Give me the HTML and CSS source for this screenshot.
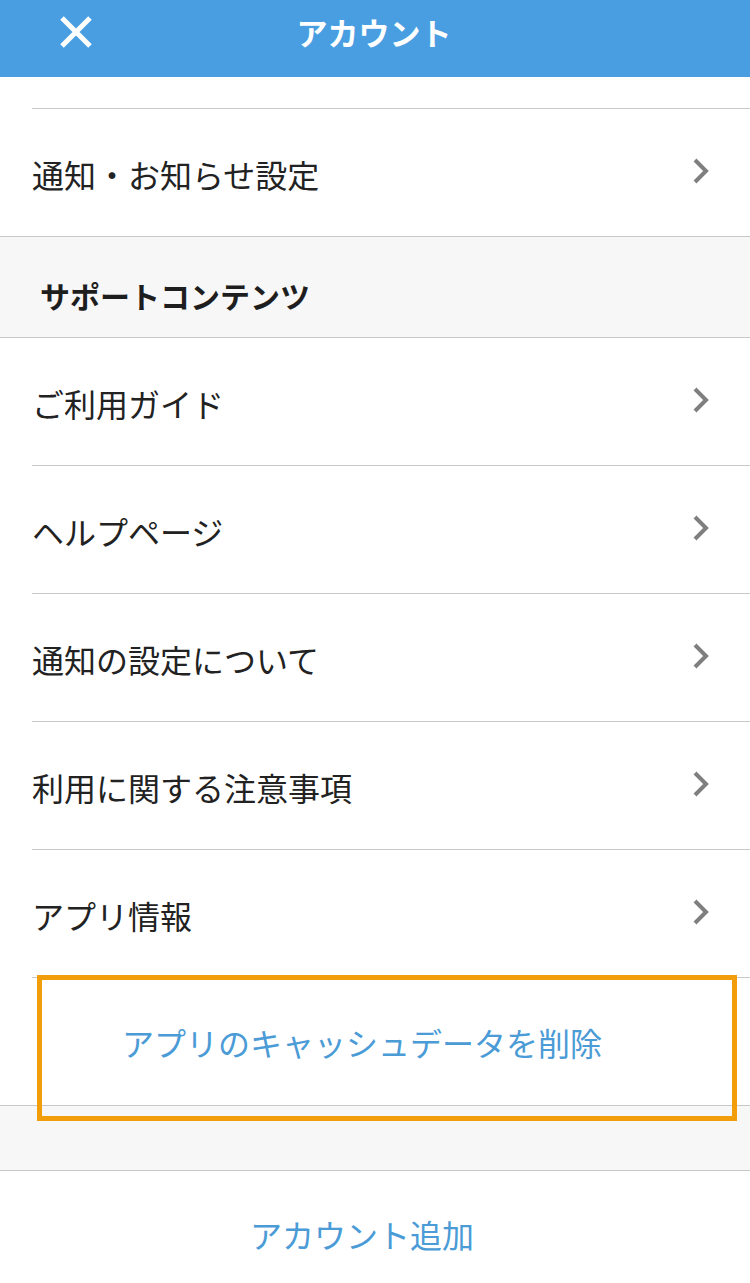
FILE: index.html
```html
<html>
  <head>
    <meta charset="utf-8">
    <link rel="stylesheet" href="styles.css">
  </head>
  <body>
    <div class="header">
      <svg class="close" width="34" height="34" viewBox="0 0 34 34">
        <path d="M3 3 L31 31 M31 3 L3 31" stroke="white" stroke-width="5" fill="none"/>
      </svg>
      <div class="title">アカウント</div>
    </div>

    <div class="list">
      <div class="row-tail"></div>
      <a class="row last" href="#">
        <span>通知・お知らせ設定</span>
        <svg class="chevron" width="18" height="28" viewBox="0 0 18 28"><path d="M3 3 L14 14 L3 25" stroke="#7f7f7f" stroke-width="4" fill="none"/></svg>
      </a>

      <div class="section">サポートコンテンツ</div>

      <a class="row" href="#">
        <span>ご利用ガイド</span>
        <svg class="chevron" width="18" height="28" viewBox="0 0 18 28"><path d="M3 3 L14 14 L3 25" stroke="#7f7f7f" stroke-width="4" fill="none"/></svg>
      </a>
      <a class="row" href="#">
        <span>ヘルプページ</span>
        <svg class="chevron" width="18" height="28" viewBox="0 0 18 28"><path d="M3 3 L14 14 L3 25" stroke="#7f7f7f" stroke-width="4" fill="none"/></svg>
      </a>
      <a class="row" href="#">
        <span>通知の設定について</span>
        <svg class="chevron" width="18" height="28" viewBox="0 0 18 28"><path d="M3 3 L14 14 L3 25" stroke="#7f7f7f" stroke-width="4" fill="none"/></svg>
      </a>
      <a class="row" href="#">
        <span>利用に関する注意事項</span>
        <svg class="chevron" width="18" height="28" viewBox="0 0 18 28"><path d="M3 3 L14 14 L3 25" stroke="#7f7f7f" stroke-width="4" fill="none"/></svg>
      </a>
      <a class="row" href="#">
        <span>アプリ情報</span>
        <svg class="chevron" width="18" height="28" viewBox="0 0 18 28"><path d="M3 3 L14 14 L3 25" stroke="#7f7f7f" stroke-width="4" fill="none"/></svg>
      </a>

      <a class="action cache" href="#">
        アプリのキャッシュデータを削除
        <div class="highlight"></div>
      </a>
      <div class="spacer"></div>
      <a class="action add" href="#">アカウント追加</a>
    </div>
  </body>
</html>
```

FILE: styles.css
```css
body {
  margin: 0;
  background-color: white;
  font-family: "Noto Sans CJK JP", "Noto Sans", sans-serif;
  color: #222222;
}
a {
  text-decoration: none;
}
.header {
  position: relative;
  height: 77px;
  background-color: #489ee0;
  display: flex;
  align-items: center;
  justify-content: center;
}
.close {
  position: absolute;
  left: 59px;
  top: 15px;
}
.title {
  color: white;
  font-size: 31px;
  font-weight: bold;
  padding-right: 2px;
  margin-bottom: 14px;
}
.list {
  display: flex;
  flex-direction: column;
}
.row-tail {
  height: 31px;
  margin-left: 32px;
  border-bottom: 1px solid #c8c8c8;
}
.row {
  height: 127px;
  margin-left: 32px;
  padding-right: 40px;
  border-bottom: 1px solid #c8c8c8;
  display: flex;
  align-items: center;
  justify-content: space-between;
  color: #222222;
  font-size: 32px;
}
.row span {
  padding-top: 2px;
}
.row.last {
  margin-left: 0;
  padding-left: 32px;
}
.chevron {
  margin-top: -4px;
}
.section {
  background-color: #f7f7f7;
  border-bottom: 1px solid #c8c8c8;
  padding-left: 40px;
  display: flex;
  align-items: center;
  font-size: 30px;
  font-weight: bold;
  padding-top: 16px;
  box-sizing: border-box;
  height: 101px;
  color: #1e1e1e;
}
.action {
  position: relative;
  display: flex;
  align-items: center;
  justify-content: center;
  padding-right: 26px;
  color: #4b9bd6;
  font-size: 32px;
}
.cache {
  height: 127px;
  border-bottom: 1px solid #c8c8c8;
}
.highlight {
  position: absolute;
  left: 37px;
  top: -3px;
  width: 690px;
  height: 136px;
  border: 5px solid #f29e0c;
}
.spacer {
  height: 64px;
  background-color: #f7f7f7;
  border-bottom: 1px solid #c8c8c8;
}
.add {
  height: 126px;
}
```
